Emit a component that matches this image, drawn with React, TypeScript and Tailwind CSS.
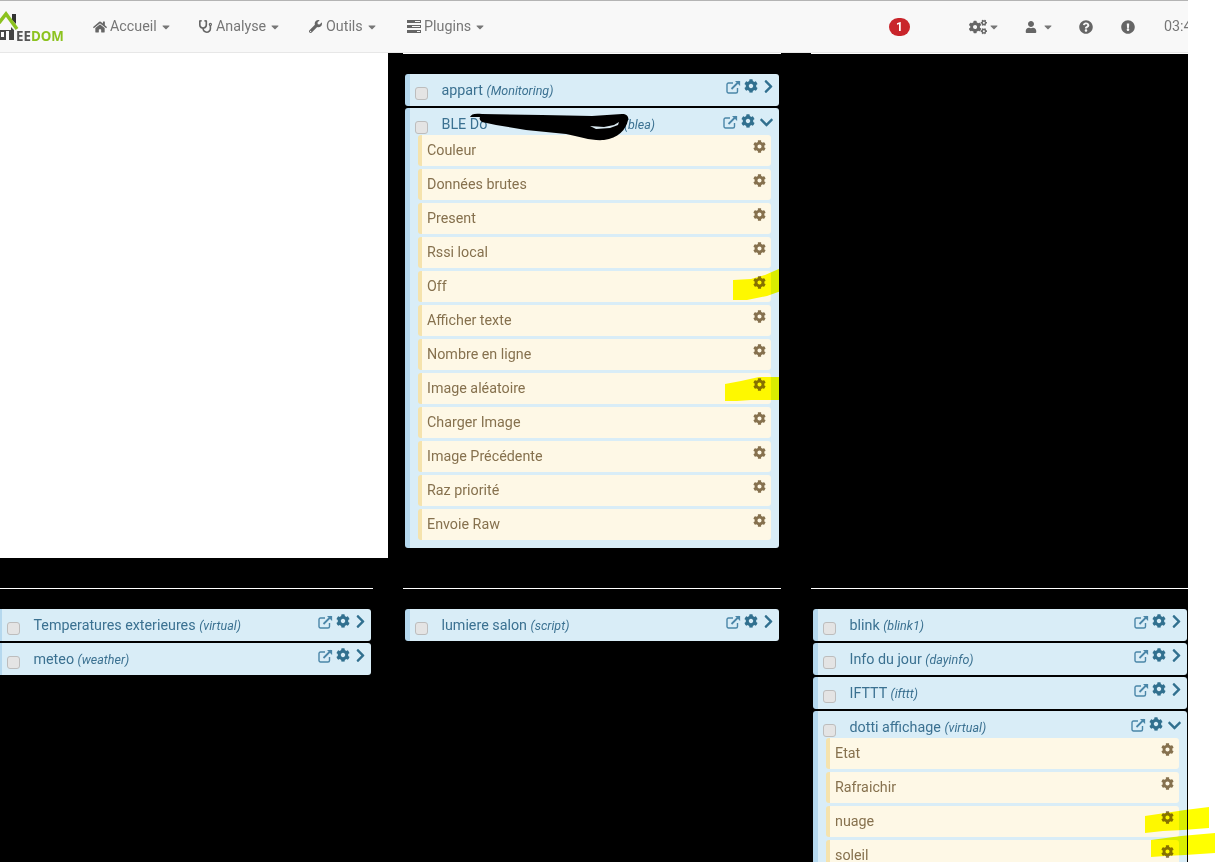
import { FaHome, FaStethoscope, FaWrench, FaCogs, FaUser, FaQuestionCircle, FaExclamationCircle, FaCog, FaChevronRight, FaChevronDown, FaCaretDown } from "react-icons/fa";

function Caret() {
  return <FaCaretDown size={12} className="text-[#777]" />;
}

function NavMenu({ icon, label, className }: { icon: React.ReactNode, label: string, className: string }) {
  return (
    <div className={`flex shrink-0 items-center ${className}`}>
      <span className="flex w-[17px] text-[#666]">{icon}</span>
      <span className="text-[14.3px] text-[#777]">{label}</span>
      <span className="ml-[3px] flex"><Caret /></span>
    </div>
  );
}

function PluginsIcon() {
  return (
    <svg width="14" height="13" viewBox="0 0 14 13" className="text-[#666]">
      <path fill="currentColor" d="M0 0h14v3H0zM0 5h14v3H0zM0 10h14v3H0z" />
      <path fill="#f8f8f8" d="M8 1h5v1H8zM5 6h8v1H5zM10 11h3v1h-3z" />
    </svg>
  );
}

function LinkIcon() {
  return (
    <svg width="15" height="14" viewBox="0 0 15 14" fill="none" stroke="#4a86a8" strokeWidth="1.4" className="shrink-0">
      <path d="M11.5 8v3.5a1.5 1.5 0 0 1-1.5 1.5H2.5A1.5 1.5 0 0 1 1 11.5V4.5A1.5 1.5 0 0 1 2.5 3H7" />
      <path d="M5.5 9L13 1.5" strokeWidth="1.8" />
      <path d="M9 .9h5.1V6z" fill="#4a86a8" stroke="none" />
    </svg>
  );
}

function Navbar() {
  return (
    <div className="relative flex h-[53px] shrink-0 items-center overflow-hidden border-t border-b border-t-[#b4b4b4] border-b-[#e7e7e7] bg-[#f8f8f8]">
      <div className="relative h-full w-[93px] shrink-0">
        <svg width="24" height="32" viewBox="0 0 24 32" className="absolute left-0 top-[10px]">
          <path fill="#333" d="M12 3h4v10l-4-4z" />
          <path fill="none" stroke="#8cc21f" strokeWidth="3.5" d="M-1 12l7-9 11 15" />
          <path fill="#444" d="M0 19h11v-3l3 3v10H0z" />
          <path fill="#f8f8f8" d="M1 21h3v5H1zM6 20h3v9H6z" />
        </svg>
        <span className="absolute left-[16px] top-[26px] font-['Open_Sans',sans-serif] text-[13.3px] font-bold leading-[18px] text-[#555]">
          EE<span className="text-[#8cc21f]">DOM</span>
        </span>
      </div>
      <NavMenu className="w-[106px]" icon={<FaHome size={14} />} label="Accueil" />
      <NavMenu className="w-[110px]" icon={<FaStethoscope size={13} />} label="Analyse" />
      <NavMenu className="w-[98px]" icon={<FaWrench size={13} />} label="Outils" />
      <NavMenu className="w-[100px]" icon={<PluginsIcon />} label="Plugins" />
      <div className="ml-[382px] flex h-[18px] w-[21px] shrink-0 items-center justify-center rounded-full bg-[#c9252b] text-[12px] font-bold text-white">1</div>
      <div className="ml-[59px] flex w-[56px] shrink-0 items-center gap-[1px] text-[#666]"><FaCogs size={18} /><Caret /></div>
      <div className="flex w-[54px] shrink-0 items-center gap-[5px] text-[#666]"><FaUser size={12} /><Caret /></div>
      <div className="flex w-[42px] shrink-0 text-[#666]"><FaQuestionCircle size={14} /></div>
      <div className="flex w-[43px] shrink-0 text-[#666]"><FaExclamationCircle size={14} /></div>
      <span className="shrink-0 whitespace-nowrap text-[14.3px] text-[#777]">03:45</span>
    </div>
  );
}

function Command({ name }: { name: string }) {
  return (
    <div className="mb-[3px] flex h-[31px] items-start justify-between rounded-[3px] border-l-[4px] border-[#f5e3ad] bg-[#fef8e6] pl-[5px] pr-[5px] text-[14.3px] leading-[31px] text-[#86714e]">
      <span>{name}</span>
      <FaCog size={13} className="mt-[5px]" />
    </div>
  );
}

function Equipment({ name, plugin, open, commands, children }: { name?: string, plugin: string, open?: boolean, commands?: string[], children?: React.ReactNode }) {
  return (
    <div className={`mb-[2px] rounded-[3px] border-l-[5px] border-[#b5d8ee] bg-[#d9edf7] ${open ? "pb-[5px]" : ""}`}>
      <div className={`flex items-start pl-[5px] ${open ? "h-[27px]" : "h-[32px]"}`}>
        <input type="checkbox" readOnly className="mt-[13px] h-[13px] w-[13px] shrink-0 appearance-none rounded-[3px] border border-[#bdbdbd] bg-[#e4e4e4]" />
        <div className="ml-[13.5px] mt-[6px] whitespace-nowrap text-[14.3px] leading-[20px] text-[#3b7191]">
          {name}{children} <i className="text-[12.5px]">({plugin})</i>
        </div>
        <div className={`ml-auto flex items-start text-[#31708f] ${open ? "mr-[5px] mt-[7px]" : "mr-[3px] mt-[6px]"}`}>
          <LinkIcon />
          <FaCog size={14} className="ml-[3px] -mt-px" />
          {open ? <FaChevronDown size={15} className="ml-[4px]" /> : <FaChevronRight size={15} className="ml-[3px] -mt-px" />}
        </div>
      </div>
      {open && (
        <div className="ml-[8px] mr-[8px]">
          {commands?.map((c) => <Command key={c} name={c} />)}
        </div>
      )}
    </div>
  );
}

function Divider() {
  return <div className="h-px bg-white" />;
}

export default function App() {
  return (
    <div className="relative h-[862px] w-[1215px] overflow-hidden bg-white font-['Roboto',sans-serif]">
      <div className="h-full w-[1188px] bg-black">
        <Navbar />

        {/* Top row */}
        <div className="flex h-[505px]">
          <div className="h-full w-[388px] shrink-0 bg-white" />
          <div className="ml-[15px] w-[378px] shrink-0">
            <Divider />
            <div className="px-[2px] pt-[20px]">
              <Equipment name="appart" plugin="Monitoring" />
              <Equipment
                open
                name="BLE Do"
                plugin="blea"
                commands={["Couleur", "Données brutes", "Present", "Rssi local", "Off", "Afficher texte", "Nombre en ligne", "Image aléatoire", "Charger Image", "Image Précédente", "Raz priorité", "Envoie Raw"]}
              >
                <span className="inline-block w-[133px]" />
              </Equipment>
            </div>
          </div>
          <div className="ml-[30px] w-[377px] shrink-0">
            <Divider />
          </div>
        </div>

        {/* Bottom row */}
        <div className="ml-[-5px] mt-[30px] grid grid-cols-[378px_378px_377px] gap-x-[30px]">
          <div>
            <Divider />
            <div className="px-[2px] pt-[20px]">
              <Equipment name="Temperatures exterieures" plugin="virtual" />
              <Equipment name="meteo" plugin="weather" />
            </div>
          </div>
          <div>
            <Divider />
            <div className="px-[2px] pt-[20px]">
              <Equipment name="lumiere salon" plugin="script" />
            </div>
          </div>
          <div>
            <Divider />
            <div className="pl-[2px] pr-px pt-[20px]">
              <Equipment name="blink" plugin="blink1" />
              <Equipment name="Info du jour" plugin="dayinfo" />
              <Equipment name="IFTTT" plugin="ifttt" />
              <Equipment open name="dotti affichage" plugin="virtual" commands={["Etat", "Rafraichir", "nuage", "soleil"]} />
            </div>
          </div>
        </div>
      </div>

      {/* Hand-drawn marks on the screenshot */}
      <svg width="1215" height="862" viewBox="0 0 1215 862" className="pointer-events-none absolute inset-0">
        <g className="mix-blend-multiply" fill="#ffff00">
          <path d="M733 280l18-1 14-4 16-7v23l-14 5-20 4h-14z" />
          <path d="M725 384l16-3 18-4 22 0v23h-30l-14 1-12 0z" />
          <path d="M1145 816l20-3 20-3 24-3v21l-26 2-20 1-18 2z" />
          <path d="M1151 840l30-4 34-3v20l-30 2-20 1-14 1z" />
        </g>
        <path fill="#000" d="M470 117c1-3 5-4 12-3l60 1 50 1 30-2c5 0 7 3 6 6-2 10-10 18-24 20-12 1-24-3-38-6l-40-4-30-5-14-3c-2-2-3-3-2-5z" />
        <path fill="#d8e8ef" d="M590 126l14 1 10-2 5-3-1 3-8 3-14 1z" />
      </svg>
    </div>
  );
}
